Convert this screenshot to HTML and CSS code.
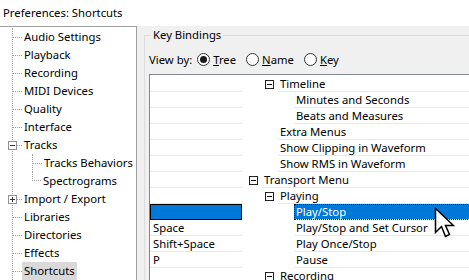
FILE: index.html
```html
<!DOCTYPE html>
<html lang="en">

<head>
    <meta charset="UTF-8">
    <title>Preferences: Shortcuts</title>
    <link rel="stylesheet" href="styles.css">
</head>

<body>
    <div class="title">Preferences: Shortcuts</div>

    <div class="main">
        <!-- category tree -->
        <nav class="nav">
            <ul class="tree">
                <li><div class="row"><span class="elbow"></span><span class="label">Audio Settings</span></div></li>
                <li><div class="row"><span class="elbow"></span><span class="label">Playback</span></div></li>
                <li><div class="row"><span class="elbow"></span><span class="label">Recording</span></div></li>
                <li><div class="row"><span class="elbow"></span><span class="label">MIDI Devices</span></div></li>
                <li><div class="row"><span class="elbow"></span><span class="label">Quality</span></div></li>
                <li><div class="row"><span class="elbow"></span><span class="label">Interface</span></div></li>
                <li>
                    <div class="row"><span class="elbow"><span class="toggle"></span></span><span class="label">Tracks</span></div>
                    <ul class="sub">
                        <li><div class="row"><span class="elbow"></span><span class="label">Tracks Behaviors</span></div></li>
                        <li><div class="row"><span class="elbow"></span><span class="label">Spectrograms</span></div></li>
                    </ul>
                </li>
                <li><div class="row"><span class="elbow"><span class="toggle plus"></span></span><span class="label">Import / Export</span></div></li>
                <li><div class="row"><span class="elbow"></span><span class="label">Libraries</span></div></li>
                <li><div class="row"><span class="elbow"></span><span class="label">Directories</span></div></li>
                <li><div class="row"><span class="elbow"></span><span class="label">Effects</span></div></li>
                <li><div class="row"><span class="elbow"></span><span class="label current">Shortcuts</span></div></li>
            </ul>
        </nav>

        <div class="pane">
            <fieldset class="group">
                <legend>Key Bindings</legend>

                <div class="viewby">
                    <span class="viewby-label">View by:</span>
                    <span class="radio checked"><span class="dot"></span><span><u>T</u>ree</span></span>
                    <span class="radio"><span class="dot"></span><span><u>N</u>ame</span></span>
                    <span class="radio"><span class="dot"></span><span><u>K</u>ey</span></span>
                </div>

                <div class="bindings">
                    <div class="brow"><div class="key"></div><div class="node depth-2"><span class="twisty"><span class="box"></span></span><span class="name">Timeline</span></div></div>
                    <div class="brow"><div class="key"></div><div class="node depth-3"><span class="twisty"></span><span class="name">Minutes and Seconds</span></div></div>
                    <div class="brow"><div class="key"></div><div class="node depth-3"><span class="twisty"></span><span class="name">Beats and Measures</span></div></div>
                    <div class="brow"><div class="key"></div><div class="node depth-2"><span class="twisty"></span><span class="name">Extra Menus</span></div></div>
                    <div class="brow"><div class="key"></div><div class="node depth-2"><span class="twisty"></span><span class="name">Show Clipping in Waveform</span></div></div>
                    <div class="brow"><div class="key"></div><div class="node depth-2"><span class="twisty"></span><span class="name">Show RMS in Waveform</span></div></div>
                    <div class="brow"><div class="key"></div><div class="node depth-1"><span class="twisty"><span class="box"></span></span><span class="name">Transport Menu</span></div></div>
                    <div class="brow"><div class="key"></div><div class="node depth-2"><span class="twisty"><span class="box"></span></span><span class="name">Playing</span></div></div>
                    <div class="brow selected"><div class="key"></div><div class="node depth-3"><span class="twisty"></span><span class="name">Play/Stop</span></div></div>
                    <div class="brow"><div class="key">Space</div><div class="node depth-3"><span class="twisty"></span><span class="name">Play/Stop and Set Cursor</span></div></div>
                    <div class="brow"><div class="key">Shift+Space</div><div class="node depth-3"><span class="twisty"></span><span class="name">Play Once/Stop</span></div></div>
                    <div class="brow"><div class="key">P</div><div class="node depth-3"><span class="twisty"></span><span class="name">Pause</span></div></div>
                    <div class="brow"><div class="key"></div><div class="node depth-2"><span class="twisty"><span class="box"></span></span><span class="name">Recording</span></div></div>
                </div>
            </fieldset>
        </div>
    </div>

    <!-- mouse pointer -->
    <svg class="cursor" width="21" height="32" viewBox="0 0 21 32">
        <path d="M1.5 1.5 V25.5 L7.5 19.5 L11.5 29.5 L15.5 27.5 L11.5 18.5 H19.5 Z" fill="#fff" stroke="#000" stroke-width="1.5" stroke-linejoin="miter"/>
    </svg>
</body>

</html>
```

FILE: styles.css
```css
:root {
    --bg: #f0f0f0;
    --text: #000000;
    --select: #0078d7;
    --line: #e8e8e8;
    --dots: #a0a0a0;
}

body {
    font-family: "Noto Sans", "Open Sans", sans-serif;
    font-size: 11.3px;
    color: var(--text);
    margin: 0;
    width: 469px;
    height: 280px;
    overflow: hidden;
    background: #ffffff;
    position: relative;
}

.title {
    height: 26px;
    line-height: 26px;
    padding-left: 3px;
}

.main {
    display: flex;
    height: 254px;
}

/* left tree */
.nav {
    width: 138px;
    margin-left: -1px;
    box-sizing: border-box;
    border: 1px solid #a0a0a0;
    border-bottom: none;
    background: #ffffff;
    overflow: hidden;
    flex-shrink: 0;
}

.tree,
.sub {
    list-style: none;
    margin: 0;
    padding: 0;
}

.tree {
    margin-left: 12px;
    margin-top: 1px;
    min-height: 260px;
    border-left: 1px dotted var(--dots);
}

.sub {
    margin-left: 19px;
}

.sub li {
    border-left: 1px dotted var(--dots);
}

.sub li:last-child {
    border-left: none;
}

.row {
    display: flex;
    align-items: center;
    height: 18px;
}

.elbow {
    width: 9px;
    height: 0;
    border-top: 1px dotted var(--dots);
    display: flex;
    align-items: center;
    flex-shrink: 0;
}

.sub li:last-child .elbow {
    align-self: flex-start;
    height: 8px;
    width: 8px;
    border-top: none;
    border-left: 1px dotted var(--dots);
    border-bottom: 1px dotted var(--dots);
}

.toggle {
    width: 9px;
    height: 9px;
    margin-left: -5px;
    margin-top: -1px;
    box-sizing: border-box;
    border: 1px solid #919191;
    background: #ffffff;
    display: flex;
    align-items: center;
    justify-content: center;
    position: relative;
}

.toggle::before {
    content: "";
    width: 5px;
    height: 1px;
    background: #333333;
}

.toggle.plus::after {
    content: "";
    position: absolute;
    width: 1px;
    height: 5px;
    background: #333333;
}

.label {
    padding: 0 2px;
    height: 18px;
    line-height: 18px;
    white-space: nowrap;
}

.label.current {
    background: #d9d9d9;
}

/* right side */
.pane {
    flex: 1;
    background: var(--bg);
    padding: 1px 0 0 7px;
    overflow: hidden;
}

.group {
    margin: 0 -40px 0 0;
    padding: 0 0 0 4px;
    border: 1px solid #dcdcdc;
    min-width: 0;
}

.group legend {
    margin-left: 2px;
    padding: 0 2px;
    line-height: 16px;
}

.viewby {
    display: flex;
    align-items: center;
    height: 20px;
    margin-top: 6px;
    white-space: nowrap;
}

.viewby-label {
    margin-right: 5px;
}

.radio {
    display: flex;
    align-items: center;
    gap: 3px;
    margin-right: 10px;
}

.radio .dot {
    width: 13px;
    height: 13px;
    box-sizing: border-box;
    border: 1px solid #333333;
    border-radius: 50%;
    background: #ffffff;
    display: flex;
    align-items: center;
    justify-content: center;
}

.radio.checked .dot::before {
    content: "";
    width: 7px;
    height: 7px;
    border-radius: 50%;
    background: #1a1a1a;
}

.bindings {
    margin-top: 5px;
    border: 1px solid #828790;
    border-right: none;
    background: #ffffff;
    padding-top: 1px;
    height: 220px;
}

.brow {
    display: flex;
    height: 16px;
    white-space: nowrap;
}

.key {
    width: 92px;
    flex-shrink: 0;
    box-sizing: border-box;
    border-bottom: 1px solid var(--line);
    padding-left: 3px;
    line-height: 15px;
}

.brow.selected .key {
    background: var(--select);
    border: 1px solid #000000;
}

.node {
    flex: 1;
    display: flex;
}

.depth-1 { padding-left: 7px; }
.depth-2 { padding-left: 23px; }
.depth-3 { padding-left: 39px; }

.twisty {
    width: 13px;
    flex-shrink: 0;
    display: flex;
    align-items: center;
}

.box {
    width: 9px;
    height: 9px;
    box-sizing: border-box;
    border: 1px solid #222222;
    display: flex;
    align-items: center;
    justify-content: center;
}

.box::before {
    content: "";
    width: 5px;
    height: 1px;
    background: #000000;
}

.name {
    flex: 1;
    box-sizing: border-box;
    border-bottom: 1px solid var(--line);
    padding-left: 2px;
    line-height: 15px;
}

.brow.selected .name {
    background: var(--select);
    color: #ffffff;
    outline: 1px dotted #1a1a1a;
    outline-offset: -1px;
}

.cursor {
    position: absolute;
    left: 434px;
    top: 207px;
}
```
